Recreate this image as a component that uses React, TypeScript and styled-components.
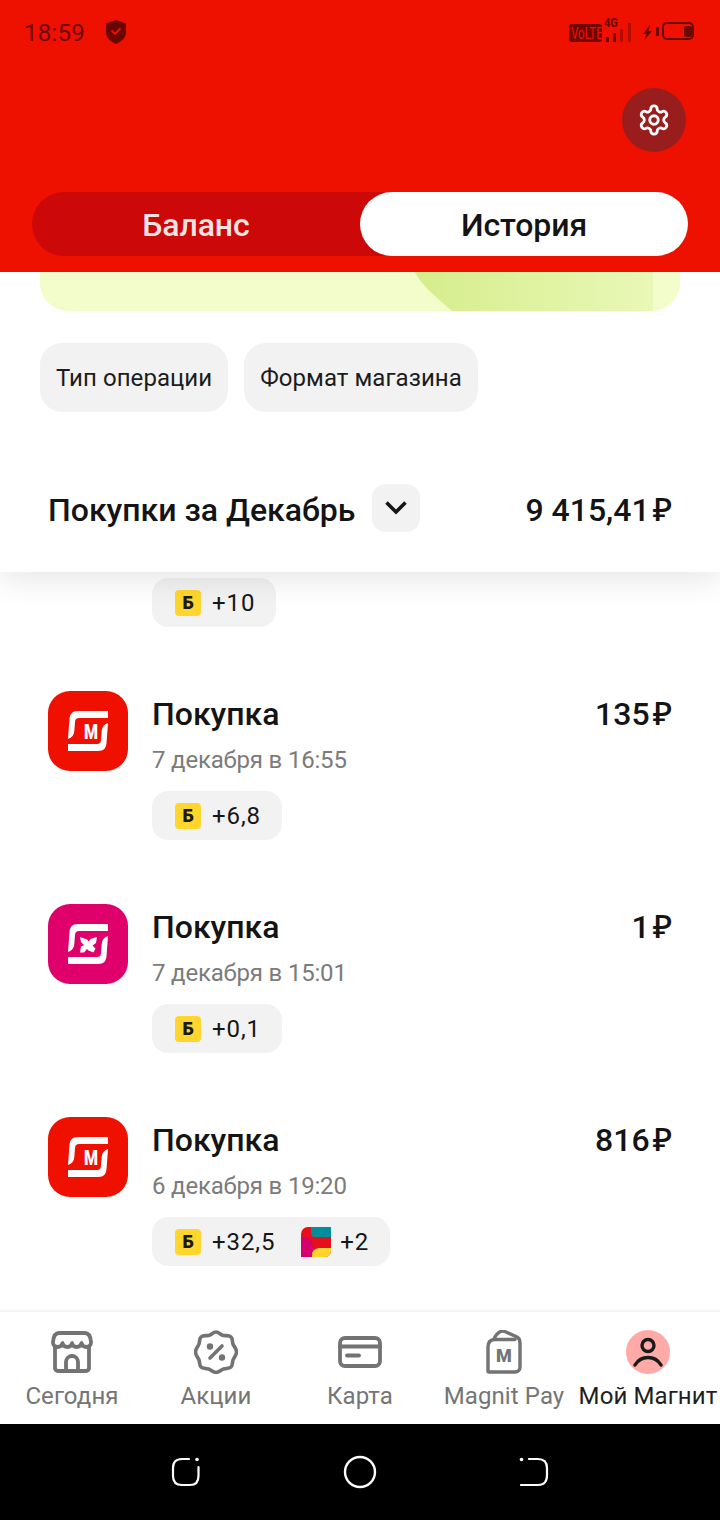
import React from 'react';
import styled, { createGlobalStyle } from 'styled-components';

const GlobalStyle = createGlobalStyle`
  html, body {
    margin: 0;
    padding: 0;
    background: #fff;
    font-family: Roboto, "Liberation Sans", sans-serif;
  }
  * { box-sizing: border-box; }
`;

const Page = styled.div`
  width: 720px;
  height: 1520px;
  display: flex;
  flex-direction: column;
  overflow: hidden;
  background: #fff;
`;

const Header = styled.header`
  height: 272px;
  flex: none;
  background: #ee1100;
  display: flex;
  flex-direction: column;
  position: relative;
  z-index: 3;
`;

const StatusBar = styled.div`
  height: 64px;
  padding: 0 24px;
  display: flex;
  align-items: center;
  color: #6d0800;
`;

const Clock = styled.span`
  font-size: 24px;
  line-height: 28px;
  letter-spacing: 0.25px;
  padding-top: 2px;
`;

const ShieldWrap = styled.span`
  display: flex;
  margin-left: 19px;
`;

const StatusRight = styled.div`
  margin-left: auto;
  display: flex;
  align-items: center;
`;

const SettingsRow = styled.div`
  display: flex;
  justify-content: flex-end;
  padding: 24px 34px 40px 0;
`;

const SettingsButton = styled.button`
  width: 64px;
  height: 64px;
  padding: 0;
  border: 0;
  border-radius: 50%;
  background: #991d1d;
  display: flex;
  align-items: center;
  justify-content: center;
`;

const Toggle = styled.div`
  margin: 0 32px;
  height: 64px;
  border-radius: 32px;
  background: #cc0808;
  display: grid;
  grid-template-columns: 328px 328px;
`;

const ToggleItem = styled.div<{ $active?: boolean }>`
  border-radius: 32px;
  display: flex;
  align-items: center;
  justify-content: center;
  padding-top: 2px;
  font-size: 32px;
  font-weight: 500;
  letter-spacing: -0.1px;
  color: ${(p) => (p.$active ? '#141414' : '#f3e3e3')};
  background: ${(p) => (p.$active ? '#fff' : 'transparent')};
`;

const Panel = styled.section`
  height: 300px;
  flex: none;
  background: #fff;
  box-shadow: 0 6px 30px rgba(0, 0, 0, 0.11);
  position: relative;
  z-index: 2;
  padding: 0 40px;
  display: flex;
  flex-direction: column;
`;

const GreenCard = styled.div`
  height: 39px;
  flex: none;
  background: #f3fccb;
  border-radius: 0 0 28px 28px;
  position: relative;
  overflow: hidden;

  &::after {
    content: '';
    position: absolute;
    left: 375px;
    top: -60px;
    width: 238px;
    height: 99px;
    background: linear-gradient(90deg, #d5ed8c 0%, #e9f8b6 100%);
    clip-path: path('M0 0 H238 V99 H37 C20 84 7 74 0 60 Z');
  }
`;

const Filters = styled.div`
  display: flex;
  gap: 16px;
  margin-top: 32px;
`;

const FilterChip = styled.div`
  height: 69px;
  padding: 0 16px;
  border-radius: 22px;
  background: #f2f2f2;
  display: flex;
  align-items: center;
  font-size: 24px;
  color: #1c1c1c;
  letter-spacing: 0.06px;
`;

const SummaryRow = styled.div`
  margin: 72px 8px 0;
  height: 48px;
  display: flex;
  align-items: center;
`;

const SummaryTitle = styled.span`
  padding-top: 3px;
  font-size: 32px;
  font-weight: 500;
  color: #141414;
`;

const DropButton = styled.div`
  width: 48px;
  height: 48px;
  margin-left: 17px;
  border-radius: 14px;
  background: #f2f2f2;
  display: flex;
  align-items: center;
  justify-content: center;
`;

const SummaryAmount = styled.span`
  margin-left: auto;
  padding-top: 3px;
  font-size: 32px;
  font-weight: 500;
  color: #141414;
`;

const Ruble = styled.span`
  font-family: "Noto Sans", Roboto, sans-serif;
  font-weight: 500;
  font-size: 33px;
  line-height: 1;
  margin-left: 3px;
`;

const List = styled.main`
  flex: 1;
  overflow: hidden;
  padding: 6px 48px 0;
  display: flex;
  flex-direction: column;
  gap: 64px;
`;

const Row = styled.article`
  display: grid;
  grid-template-columns: 80px 1fr auto;
  column-gap: 24px;
  align-items: start;
`;

const StoreIcon = styled.div<{ $bg: string }>`
  width: 80px;
  height: 80px;
  border-radius: 22px;
  background: ${(p) => p.$bg};
  display: flex;
`;

const RowBody = styled.div`
  display: flex;
  flex-direction: column;
  align-items: flex-start;
`;

const RowTitle = styled.div`
  margin-top: 5px;
  font-size: 32px;
  line-height: 36px;
  font-weight: 500;
  color: #141414;
`;

const RowDate = styled.div`
  margin-top: 12px;
  font-size: 24px;
  line-height: 32px;
  letter-spacing: -0.18px;
  color: #7b7b7b;
`;

const RowAmount = styled.div`
  margin-top: 5px;
  font-size: 32px;
  line-height: 36px;
  font-weight: 500;
  color: #141414;
`;

const BonusChip = styled.div<{ $indent?: boolean }>`
  height: 49px;
  padding: 0 21px 0 23px;
  border-radius: 16px;
  background: #f2f2f2;
  display: inline-flex;
  align-items: center;
  align-self: flex-start;
  margin-top: ${(p) => (p.$indent ? 0 : 15)}px;
  margin-left: ${(p) => (p.$indent ? 104 : 0)}px;
  font-size: 24px;
  color: #161616;
  letter-spacing: 0.9px;
`;

const BonusMark = styled.span`
  width: 26px;
  height: 26px;
  border-radius: 4px;
  background: #ffd52e;
  display: flex;
  align-items: center;
  justify-content: center;
  font-size: 18px;
  font-weight: 900;
  letter-spacing: 0;
  color: #1a1a1a;
  margin-right: 11px;
`;

const SecondBonus = styled.span`
  display: flex;
  align-items: center;
  gap: 9px;
  margin-left: 26px;
`;

const BottomNav = styled.nav`
  height: 114px;
  flex: none;
  padding-top: 2px;
  background: #fff;
  border-top: 2px solid #f4f4f4;
  display: grid;
  grid-template-columns: repeat(5, 144px);
  position: relative;
  z-index: 2;
`;

const NavItem = styled.div<{ $active?: boolean }>`
  display: flex;
  flex-direction: column;
  align-items: center;
  padding-top: 16px;
  font-size: 24px;
  white-space: nowrap;
  letter-spacing: 0.1px;
  color: ${(p) => (p.$active ? '#1f1f1f' : '#757575')};
`;

const NavIconBox = styled.div`
  height: 44px;
  display: flex;
  align-items: center;
  justify-content: center;
  margin-bottom: 8px;
`;

const Avatar = styled.div`
  width: 44px;
  height: 44px;
  border-radius: 50%;
  background: #ffaaa6;
  display: flex;
  align-items: center;
  justify-content: center;
`;

const SystemBar = styled.div`
  height: 96px;
  flex: none;
  background: #000;
  display: grid;
  grid-template-columns: repeat(3, 174px);
  justify-content: center;
  align-items: center;
  justify-items: center;
`;

const ShieldIcon = () => (
  <svg width="24" height="26" viewBox="1 0 22 26">
    <path d="M12 1l10 3.400v9.200c0 5-4.200 9-10 11.400C6.200 22.600 2 18.600 2 13.600V4.400z" fill="#6a0500" />
    <path d="M7.500 11.500l3.500 3.500 5.500-5.500" fill="none" stroke="#ee1100" strokeWidth="1.800" />
  </svg>
);

const SignalIcons = () => (
  <svg width="127" height="38" viewBox="0 -4 127 38" fill="#6d0800">
    <rect x="0" y="7" width="33" height="18" rx="3" fill="#6f0700" />
    <text transform="translate(2 22) scale(0.72 1)" fontSize="16" fill="#ee1100" fontFamily="Roboto, sans-serif">
      VoLTE
    </text>
    <text transform="translate(35 10) scale(0.85 1)" fontSize="13" fontWeight="700" fontFamily="Roboto, sans-serif">
      4G
    </text>
    <rect x="37" y="20" width="3" height="5" />
    <rect x="44" y="16" width="3" height="9" />
    <rect x="51" y="12" width="3" height="13" opacity="0.45" />
    <rect x="59" y="6" width="3" height="19" opacity="0.45" />
    <path d="M81 8L74 17h3.500L75.500 23 83 14h-3.500z" />
    <rect x="87" y="10" width="3" height="9" />
    <rect x="94" y="6" width="30" height="16" rx="4" fill="none" stroke="#6d0800" strokeWidth="2" />
    <rect x="115" y="9" width="8" height="11" rx="2" />
  </svg>
);

const GearIcon = () => (
  <svg width="34" height="34" viewBox="0 0 24 24" fill="none" stroke="#fff" strokeWidth="2" strokeLinecap="round" strokeLinejoin="round">
    <path d="M12.220 2h-.44a2 2 0 0 0-2 2v.18a2 2 0 0 1-1 1.730l-.43.250a2 2 0 0 1-2 0l-.15-.08a2 2 0 0 0-2.730.73l-.22.380a2 2 0 0 0 .73 2.730l.15.100a2 2 0 0 1 1 1.720v.510a2 2 0 0 1-1 1.740l-.15.090a2 2 0 0 0-.73 2.730l.22.380a2 2 0 0 0 2.730.73l.15-.08a2 2 0 0 1 2 0l.43.250a2 2 0 0 1 1 1.730V20a2 2 0 0 0 2 2h.44a2 2 0 0 0 2-2v-.18a2 2 0 0 1 1-1.730l.43-.250a2 2 0 0 1 2 0l.15.080a2 2 0 0 0 2.730-.73l.22-.390a2 2 0 0 0-.73-2.730l-.15-.080a2 2 0 0 1-1-1.740v-.500a2 2 0 0 1 1-1.740l.15-.090a2 2 0 0 0 .73-2.730l-.22-.380a2 2 0 0 0-2.730-.73l-.15.080a2 2 0 0 1-2 0l-.43-.250a2 2 0 0 1-1-1.730V4a2 2 0 0 0-2-2z" />
    <circle cx="12" cy="12" r="3" />
  </svg>
);

const ChevronIcon = () => (
  <svg width="24" height="16" viewBox="0 0 24 16" fill="none" stroke="#161616" strokeWidth="3.600">
    <path d="M2.500 2.500L12 12l9.500-9.500" />
  </svg>
);

// store logo: two brackets and what sits between them differ by format
const MagnitLogo = ({ bg, butterfly }: { bg: string; butterfly?: boolean }) => (
  <StoreIcon $bg={bg}>
    <svg width="80" height="80" viewBox="0 0 80 80">
      <path d="M60 20H30C24 20 22 23 21.500 28L20 48C24 46.500 26 44 26.300 40L27 31C27.300 28 28.500 27 31 27H60Z" fill="#fff" />
      <path d="M20 60H50C56 60 58 57 58.500 52L60 32C56 33.500 54 36 53.700 40L53 49C52.700 52 51.500 53 49 53H20Z" fill="#fff" />
      {butterfly ? (
        <path d="M32 33l7 2.500 1.500 2 2-2.500 6.500-2-1 6-3.500 2.500 3 3-2 4-5-2-1.500-1.500-3 3.500-4 0 1-6 3-1.500-3-3z" fill="#fff" />
      ) : (
        <text transform="translate(43 48) scale(0.8 1)" textAnchor="middle" fontSize="20" fontWeight="900" fill="#fff" fontFamily="Roboto, sans-serif">
          М
        </text>
      )}
    </svg>
  </StoreIcon>
);

const PartnerMark = () => (
  <svg width="30" height="30" viewBox="0 0 30 30">
    <path d="M0 7a7 7 0 0 1 7-7h23v24a6 6 0 0 1-6 6H0z" fill="#e5101c" />
    <path d="M10 0h20v10H14q-4 0-4-4z" fill="#008f9c" />
    <path d="M0 10q9-1 11 6 2 6 0 14H0z" fill="#d4006e" />
    <path d="M11 30q-1-8 7-9h12v3a6 6 0 0 1-6 6z" fill="#ffd52e" />
  </svg>
);

const StoreNavIcon = () => (
  <svg width="42" height="42" viewBox="0 0 42 42" fill="none" stroke="#737373" strokeWidth="3.800" strokeLinejoin="round" strokeLinecap="round">
    <path d="M8 2h26c3 0 5.500 3 6 9 .3 3-2 5-4.500 5-2.500 0-4.500-1.500-5-4-.5 2.500-2.500 4-5 4s-4-1.500-4.500-4c-.5 2.500-2 4-4.500 4s-4.500-1.500-5-4c-.5 2.500-2.500 4-5 4S1.700 14 2 11C2.500 5 5 2 8 2z" />
    <path d="M4 16v21a3 3 0 0 0 3 3h28a3 3 0 0 0 3-3V16" />
    <path d="M15 40V31a6 6 0 0 1 12 0v9" />
  </svg>
);

const PromoNavIcon = () => (
  <svg width="44" height="44" viewBox="0 0 44 44" fill="none" stroke="#737373" strokeWidth="3.600" strokeLinecap="round" strokeLinejoin="round">
    <path d="M22 2c3 0 4.500 3 7.500 3.500S35 5 37 7s1 4.500 2 7 3.500 4.500 3.500 8-2.500 5-3.500 8 0 5-2 7-4.500 1-7.500 2-4.500 3.500-7.500 3.500-4.500-2.500-7.500-3.500-5.500 0-7.500-2-1-4.500-2-7-3.500-4.500-3.500-8S4 17 5 14 5 9 7 7s4.500-1 7.500-1.500S19 2 22 2z" />
    <path d="M28 16L16 28" />
    <circle cx="16" cy="16.500" r="1.400" fill="#737373" />
    <circle cx="28" cy="27.500" r="1.400" fill="#737373" />
  </svg>
);

const CardNavIcon = () => (
  <svg width="44" height="32" viewBox="0 0 44 32" fill="none" stroke="#737373" strokeWidth="3.800" strokeLinecap="round">
    <rect x="2" y="2" width="40" height="28" rx="5" />
    <path d="M2 10.500h40" strokeWidth="4" />
    <path d="M9 19.500h12" />
  </svg>
);

const PayNavIcon = () => (
  <svg width="36" height="44" viewBox="0 0 36 44" fill="none" stroke="#737373" strokeWidth="3.400" strokeLinejoin="round" strokeLinecap="round">
    <path d="M2 41V17C2 12.500 4.500 10 8 9.500C9 6 11 3.500 14 1.800C16 .8 18 1 20 2L31 7C33 8 34 10 34 13V37C34 40 32 42 29 42H3C2.400 42 2 41.600 2 41Z" />
    <path d="M8 9.500H29" />
    <text x="18" y="32" textAnchor="middle" fontSize="18" fontWeight="900" fill="#737373" stroke="none" fontFamily="Roboto, sans-serif">
      M
    </text>
  </svg>
);

const PersonIcon = () => (
  <svg width="30" height="30" viewBox="0 0 30 30" fill="none" stroke="#1a1a1a" strokeWidth="3.400" strokeLinecap="round">
    <circle cx="15" cy="8.500" r="6" />
    <path d="M2 28c3-5 7.500-7.500 13-7.500S25 23 28 28" />
  </svg>
);

const RecentIcon = () => (
  <svg width="32" height="32" viewBox="0 0 32 32" fill="none" stroke="#fff" strokeWidth="2.200" strokeLinecap="round">
    <path d="M19 3H12C6 3 3 6 3 12v8c0 6 3 9 9 9h8c6 0 8.500-3 8.500-9V11" />
    <circle cx="27" cy="3.500" r="1.800" fill="#fff" stroke="none" />
  </svg>
);

const HomeIcon = () => (
  <svg width="34" height="34" viewBox="0 0 34 34" fill="none" stroke="#fff" strokeWidth="2.400">
    <circle cx="17" cy="17" r="15" />
  </svg>
);

const BackIcon = () => (
  <svg width="32" height="32" viewBox="0 0 32 32" fill="none" stroke="#fff" strokeWidth="2.200" strokeLinecap="round">
    <path d="M11 3h9c6 0 9 3 9 9v7c0 7-3 10-9 10H3" />
    <circle cx="3.500" cy="3.500" r="1.800" fill="#fff" stroke="none" />
  </svg>
);

const purchases = [
  { bg: '#f01000', amount: '135', date: '7 декабря в 16:55', bonus: '+6,8' },
  { bg: '#e0006c', amount: '1', date: '7 декабря в 15:01', bonus: '+0,1', butterfly: true },
  { bg: '#f01000', amount: '816', date: '6 декабря в 19:20', bonus: '+32,5', extra: '+2' },
];

const navItems = [
  { label: 'Сегодня', icon: <StoreNavIcon /> },
  { label: 'Акции', icon: <PromoNavIcon /> },
  { label: 'Карта', icon: <CardNavIcon /> },
  { label: 'Magnit Pay', icon: <PayNavIcon /> },
  {
    label: 'Мой Магнит',
    active: true,
    icon: (
      <Avatar>
        <PersonIcon />
      </Avatar>
    ),
  },
];

export default function App() {
  return (
    <Page>
      <GlobalStyle />
      <Header>
        <StatusBar>
          <Clock>18:59</Clock>
          <ShieldWrap>
            <ShieldIcon />
          </ShieldWrap>
          <StatusRight>
            <SignalIcons />
          </StatusRight>
        </StatusBar>
        <SettingsRow>
          <SettingsButton>
            <GearIcon />
          </SettingsButton>
        </SettingsRow>
        <Toggle>
          <ToggleItem>Баланс</ToggleItem>
          <ToggleItem $active>История</ToggleItem>
        </Toggle>
      </Header>

      <Panel>
        <GreenCard />
        <Filters>
          <FilterChip>Тип операции</FilterChip>
          <FilterChip>Формат магазина</FilterChip>
        </Filters>
        <SummaryRow>
          <SummaryTitle>Покупки за Декабрь</SummaryTitle>
          <DropButton>
            <ChevronIcon />
          </DropButton>
          <SummaryAmount>
            9 415,41<Ruble>₽</Ruble>
          </SummaryAmount>
        </SummaryRow>
      </Panel>

      <List>
        <BonusChip $indent>
          <BonusMark>Б</BonusMark>+10
        </BonusChip>
        {purchases.map((p) => (
          <Row key={p.date}>
            <MagnitLogo bg={p.bg} butterfly={p.butterfly} />
            <RowBody>
              <RowTitle>Покупка</RowTitle>
              <RowDate>{p.date}</RowDate>
              <BonusChip>
                <BonusMark>Б</BonusMark>
                {p.bonus}
                {p.extra && (
                  <SecondBonus>
                    <PartnerMark />
                    {p.extra}
                  </SecondBonus>
                )}
              </BonusChip>
            </RowBody>
            <RowAmount>
              {p.amount}
              <Ruble>₽</Ruble>
            </RowAmount>
          </Row>
        ))}
      </List>

      <BottomNav>
        {navItems.map((item) => (
          <NavItem key={item.label} $active={item.active}>
            <NavIconBox>{item.icon}</NavIconBox>
            {item.label}
          </NavItem>
        ))}
      </BottomNav>

      <SystemBar>
        <RecentIcon />
        <HomeIcon />
        <BackIcon />
      </SystemBar>
    </Page>
  );
}
